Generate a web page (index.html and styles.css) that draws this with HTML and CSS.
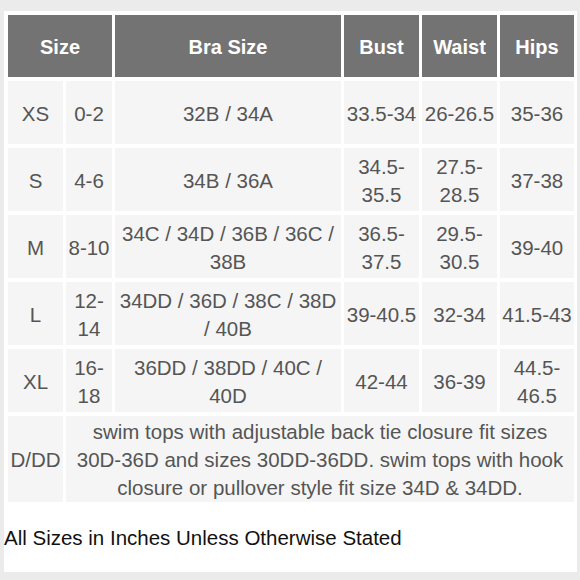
FILE: index.html
```html
<!DOCTYPE html>
<html>
<head>
<meta charset="utf-8">
<link rel="stylesheet" href="styles.css">
</head>
<body>
<div class="panel">
  <table class="chart">
    <colgroup>
      <col class="c1"><col class="c2"><col class="c3"><col class="c4"><col class="c5"><col class="c6">
    </colgroup>
    <thead>
      <tr class="head">
        <th colspan="2">Size</th>
        <th>Bra Size</th>
        <th>Bust</th>
        <th>Waist</th>
        <th>Hips</th>
      </tr>
    </thead>
    <tbody>
      <tr><td>XS</td><td>0-2</td><td>32B / 34A</td><td>33.5-34</td><td>26-26.5</td><td>35-36</td></tr>
      <tr><td>S</td><td>4-6</td><td>34B / 36A</td><td>34.5-35.5</td><td>27.5-28.5</td><td>37-38</td></tr>
      <tr><td>M</td><td>8-10</td><td>34C / 34D / 36B / 36C / 38B</td><td>36.5-37.5</td><td>29.5-30.5</td><td>39-40</td></tr>
      <tr><td>L</td><td>12-14</td><td>34DD / 36D / 38C / 38D / 40B</td><td>39-40.5</td><td>32-34</td><td>41.5-43</td></tr>
      <tr><td>XL</td><td>16-18</td><td>36DD / 38DD / 40C / 40D</td><td>42-44</td><td>36-39</td><td>44.5-46.5</td></tr>
      <tr class="tall"><td>D/DD</td><td class="wide" colspan="5">swim tops with adjustable back tie closure fit sizes 30D-36D and sizes 30DD-36DD. swim tops with hook closure or pullover style fit size 34D &amp; 34DD.</td></tr>
    </tbody>
  </table>
  <p class="note">All Sizes in Inches Unless Otherwise Stated</p>
</div>
</body>
</html>
```
FILE: styles.css
```css
html, body {
  margin: 0;
  padding: 0;
}
body {
  background: #ebebec;
  width: 580px;
  height: 580px;
  overflow: hidden;
  font-family: "Liberation Sans", Arial, sans-serif;
}
.panel {
  margin: 11px 3px 0 4px;
  padding-left: 1px;
  height: 561px;
  background: #ffffff;
  box-sizing: border-box;
}
.chart {
  table-layout: fixed;
  width: 572px;
  border-collapse: separate;
  border-spacing: 3px 4px;
  margin-left: 0;
}
.c1 { width: 55px; }
.c2 { width: 46px; }
.c3 { width: 226px; }
.c4 { width: 75px; }
.c5 { width: 75px; }
.c6 { width: 74px; }
.chart th,
.chart td {
  padding: 2px 1px 0;
  text-align: center;
  vertical-align: middle;
  box-sizing: border-box;
}
.chart th {
  background: #737373;
  color: #ffffff;
  font-weight: bold;
  font-size: 20px;
  height: 62px;
}
.chart td {
  background: #f5f5f5;
  color: #555555;
  font-size: 20.5px;
  line-height: 28px;
  height: 63px;
}
.chart .tall td {
  height: 85px;
}
.chart td.wide {
  padding: 2px 5px 0;
}
.note {
  margin: 20px 0 0 -1px;
  font-size: 20.5px;
  color: #111111;
}
```
